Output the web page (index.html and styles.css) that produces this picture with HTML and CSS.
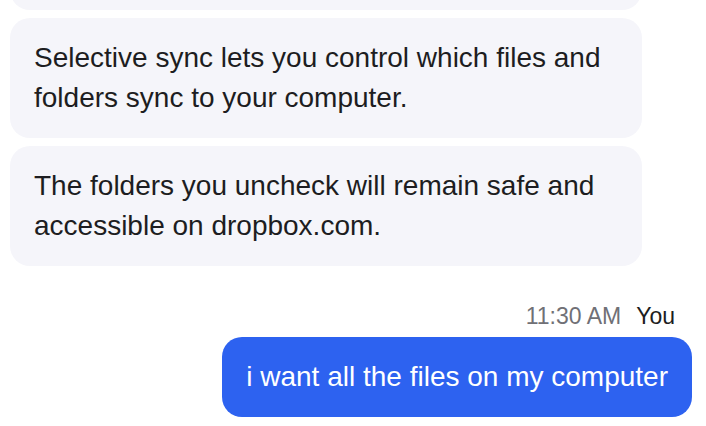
FILE: index.html
```html
<!DOCTYPE html>
<html lang="en">
<head>
<meta charset="utf-8">
<title>Chat</title>
<link rel="stylesheet" href="styles.css">
</head>
<body>
<main class="chat">
  <div class="group">
    <div class="bubble bubble--in bubble--prev" aria-hidden="true"></div>
    <div class="bubble bubble--in">Selective sync lets you control which files and folders sync to your computer.</div>
    <div class="bubble bubble--in">The folders you uncheck will remain safe and accessible on dropbox.com.</div>
  </div>
  <div class="group group--out">
    <div class="meta"><span class="meta__time">11:30 AM</span><span class="meta__name">You</span></div>
    <div class="bubble bubble--out">i want all the files on my computer</div>
  </div>
</main>
</body>
</html>
```
FILE: styles.css
```css
html, body {
  margin: 0;
  padding: 0;
  background: #ffffff;
}
body {
  font-family: "Liberation Sans", Arial, Helvetica, sans-serif;
  color: #1d1d21;
}
.chat {
  height: 426px;
  overflow: hidden;
  display: flex;
  flex-direction: column;
  justify-content: flex-end;
  padding: 0 14px 9px 10px;
  box-sizing: border-box;
}
.group {
  display: flex;
  flex-direction: column;
  gap: 8px;
}
.group--out {
  align-items: flex-end;
  gap: 0;
  margin-top: 35px;
}
.bubble {
  font-size: 28px;
  line-height: 40px;
  padding: 20px 24px;
  border-radius: 20px;
}
.bubble--in {
  width: 632px;
  box-sizing: border-box;
  background: #f5f5fa;
  color: #1d1d21;
}
.bubble--prev {
  height: 120px;
  flex-shrink: 0;
}
.bubble--out {
  background: #2d62f0;
  color: #ffffff;
}
.meta {
  display: flex;
  gap: 15px;
  font-size: 23px;
  line-height: 30px;
  padding-right: 17px;
  margin-bottom: 6px;
}
.meta__time {
  color: #707076;
}
.meta__name {
  color: #1d1d21;
}
```
